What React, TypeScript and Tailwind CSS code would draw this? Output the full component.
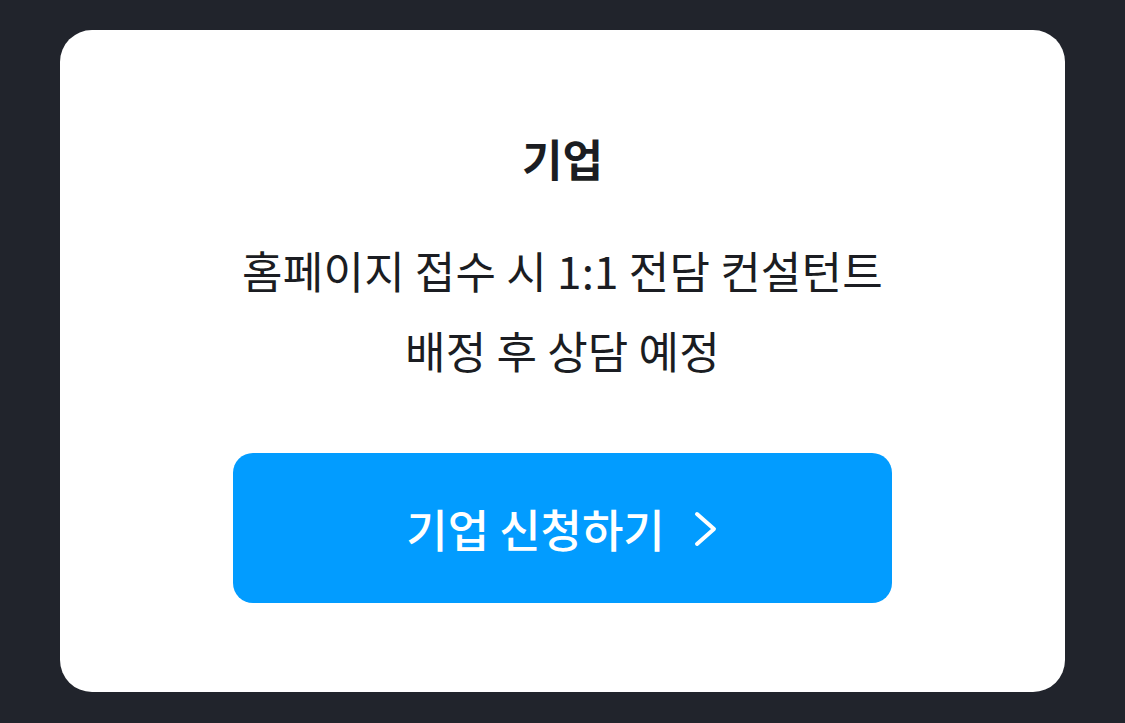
export default function App() {
  return (
    <div
      className="min-h-[723px] w-full bg-[#21242c] pt-[30px] pl-[60px] pr-[60px]"
      style={{ fontFamily: '"Noto Sans CJK KR", "Noto Sans", sans-serif' }}
    >
      <div className="flex h-[662px] w-[1005px] flex-col items-center rounded-[32px] bg-white pt-[102px]">
        {/* Title */}
        <h2 className="text-[44px] font-bold leading-[52px] text-[#1b1d22]">기업</h2>

        {/* Description */}
        <p className="mt-[46px] text-center text-[44px] leading-[80px] tracking-[0.2px] text-[#1b1d22]">
          홈페이지 접수 시 1:1 전담 컨설턴트
          <br />
          배정 후 상담 예정
        </p>

        {/* CTA */}
        <button
          type="button"
          className="mt-[63px] flex h-[150px] w-[659px] items-center justify-center gap-[28px] rounded-[20px] bg-[#029cff] text-white"
        >
          <span className="text-[45px] font-medium leading-none">기업 신청하기</span>
          <svg width="26" height="38" viewBox="0 0 26 38" fill="none" className="mt-[2px]">
            <path d="M4 4 L21 19 L4 34" stroke="currentColor" strokeWidth="4" strokeLinecap="round" strokeLinejoin="round" />
          </svg>
        </button>
      </div>
    </div>
  );
}
